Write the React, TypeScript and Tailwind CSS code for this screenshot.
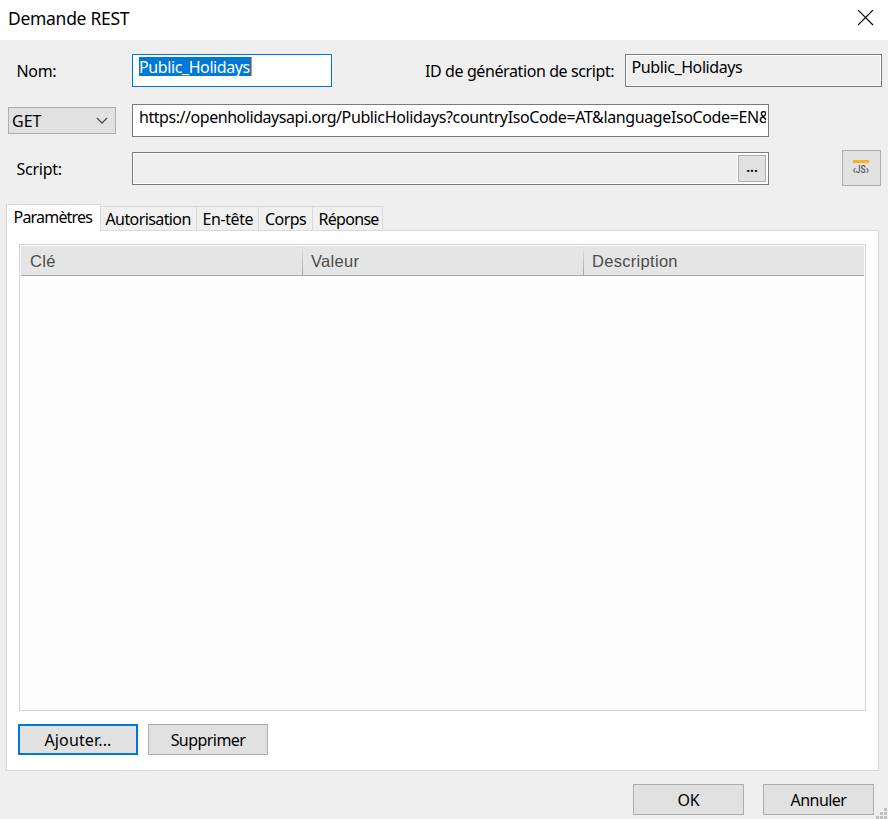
import clsx from "clsx";

const tabs = [
  { label: "Autorisation", width: "w-[96px] pl-[4.5px]", tracking: "tracking-[-0.6px]" },
  { label: "En-tête", width: "w-[62px] pl-[5.5px]", tracking: "tracking-[-0.4px]" },
  { label: "Corps", width: "w-[54px] pl-[6px]", tracking: "tracking-[-0.55px]" },
  { label: "Réponse", width: "w-[70px] pl-[5.5px]", tracking: "tracking-[-0.7px]" },
];

const columns = [
  { label: "Clé", width: "w-[282px]" },
  { label: "Valeur", width: "w-[281px]" },
  { label: "Description", width: "w-[280px]" },
];

type ButtonProps = {
  label: string;
  className: string;
  primary?: boolean;
  tracking?: string;
};

const Button = ({ label, className, primary, tracking }: ButtonProps) => (
  <button
    className={clsx(
      "flex h-[31px] items-center justify-center bg-[#e1e1e1] pt-px",
      primary ? "border-2 border-[#0078d7]" : "border border-[#adadad]",
      className
    )}
  >
    <span className={tracking}>{label}</span>
  </button>
);

const ResizeGrip = () => (
  <svg className="absolute right-[1px] bottom-0" width="11" height="11" fill="#bfbfbf">
    <rect x="8" y="0" width="3" height="3" />
    <rect x="4" y="4" width="3" height="3" />
    <rect x="8" y="4" width="3" height="3" />
    <rect x="0" y="8" width="3" height="3" />
    <rect x="4" y="8" width="3" height="3" />
    <rect x="8" y="8" width="3" height="3" />
  </svg>
);

const App = () => {
  return (
    <div className="relative flex h-[819px] w-[888px] flex-col overflow-hidden bg-[#efefef] font-['Noto_Sans',sans-serif] text-[16px] leading-[22px] whitespace-nowrap text-black">
      {/* Title bar */}
      <header className="flex h-10 items-start justify-between bg-white pr-[14px] pl-2">
        <h1 className="pt-[7px] text-[17.5px] tracking-[-0.3px]">Demande REST</h1>
        <svg className="mt-[10px]" width="16" height="16" stroke="#000" strokeWidth="1.1" fill="none">
          <path d="M0 0 15 15M15 0 0 15" />
        </svg>
      </header>

      {/* Name and script id */}
      <div className="mt-[14px] flex h-[33px] pr-[6px]">
        <span className="w-[132px] pt-[6px] pl-[16.5px] tracking-[-0.35px]">Nom:</span>
        <div className="w-[200px] border border-[#0078d7] bg-white pt-[2px] pl-[6px]">
          <span className="block h-[19px] w-[113px] border-r border-[#ff8728] bg-[#0078d7] leading-[20px] tracking-[-0.4px] text-white">
            Public_Holidays
          </span>
        </div>
        <span className="w-[292px] pt-[6px] pl-[93px] tracking-[-0.4px]">ID de génération de script:</span>
        <div className="ml-px flex-1 border border-[#7a7a7a] bg-[#efefef] pt-px pl-[5.5px] tracking-[-0.4px] shadow-[inset_0_0_0_1px_#fff]">
          Public_Holidays
        </div>
      </div>

      {/* Method and URL */}
      <div className="mt-[17px] flex h-[33px] pl-2">
        <button className="mt-[3px] mr-4 flex h-[27px] w-[108px] items-center justify-between border border-[#adadad] bg-[#e1e1e1] pt-px pr-[7px] pl-[3px]">
          <span>GET</span>
          <svg width="12" height="8" fill="none" stroke="#444" strokeWidth="1.2">
            <path d="M1 1 6 6.2 11 1" />
          </svg>
        </button>
        <div className="w-[637px] border border-[#7a7a7a] bg-white pt-px pr-[2px] pl-[6px]">
          <div className="overflow-hidden tracking-[-0.38px]">
            <span className="tracking-[-0.45px]">https://openholidaysapi.org/</span>
            PublicHolidays?countryIsoCode=AT&amp;languageIsoCode=EN&amp;
          </div>
        </div>
      </div>

      {/* Script */}
      <div className="mt-[13px] flex h-9">
        <span className="w-[132px] pt-[8px] pl-[16.5px] tracking-[-0.25px]">Script:</span>
        <div className="mt-[2px] flex h-[33px] w-[637px] justify-end border border-[#7a7a7a] bg-[#efefef] p-px shadow-[inset_0_0_0_1px_#fff]">
          <div className="border border-white">
            <button className="flex h-[27px] w-7 items-center justify-center border border-[#adadad] bg-[#e1e1e1] pb-[3px] text-[14px] font-semibold">
              ...
            </button>
          </div>
        </div>
        <button className="ml-[73px] flex h-9 w-[39px] flex-col items-center border border-[#adadad] bg-[#e1e1e1] pt-[9px] pr-px">
          <span className="h-[3px] w-4 bg-[#f5b324]" />
          <span className="mt-px flex scale-x-[0.85] items-center font-['Roboto',sans-serif] text-[10px] leading-[12px] font-medium text-[#5a5a5a]">
            <span className="text-[13px]">‹</span>
            <span>JS</span>
            <span className="text-[13px]">›</span>
          </span>
        </button>
      </div>

      {/* Tabs */}
      <div className="relative z-10 mt-[18px] -mb-px flex h-[27px] items-end pl-[6px]">
        <div className="h-[27px] w-[95px] border border-b-0 border-[#d9d9d9] bg-white pt-px pl-[6.5px] tracking-[-0.8px]">
          Paramètres
        </div>
        {tabs.map((tab) => (
          <div
            key={tab.label}
            className={clsx("h-[25px] border-t border-r border-b border-[#d9d9d9] bg-[#f0f0f0] pt-px", tab.width)}
          >
            <span className={tab.tracking}>{tab.label}</span>
          </div>
        ))}
      </div>

      {/* Panel with the parameters table */}
      <div className="ml-[6px] h-[541px] w-[873px] border border-[#d9d9d9] bg-white pt-[13px] pl-3">
        <div className="h-[467px] w-[847px] border border-[#d4d4d4] bg-[#fdfdfd]">
          <div className="mt-px ml-px flex h-[30px] w-[843px] border-b border-[#a5a5a5] bg-[#e5e5e5] font-['Liberation_Sans',sans-serif] text-[16.5px] text-[#4c4c4c]">
            {columns.map((column, i) => (
              <div
                key={column.label}
                className={clsx("flex justify-between pt-[4px]", i === 0 ? "pl-[9px]" : "pl-[8px]", column.width)}
              >
                <span className="tracking-[0.3px]">{column.label}</span>
                {i < 2 && <span className="-mt-[4px] h-[29px] w-px bg-linear-to-b from-[#e5e5e5] to-[#a5a5a5]" />}
              </div>
            ))}
          </div>
        </div>
        <div className="-ml-px mt-[13px] flex gap-[10px]">
          <Button label="Ajouter..." className="w-[120px]" primary tracking="tracking-[0.15px]" />
          <Button label="Supprimer" className="w-[120px]" tracking="tracking-[-0.55px]" />
        </div>
      </div>

      {/* Dialog buttons */}
      <footer className="mt-[13px] flex justify-end gap-[19px] pr-[14px]">
        <Button label="OK" className="w-[111px]" tracking="tracking-[-0.3px]" />
        <Button label="Annuler" className="w-[111px]" tracking="tracking-[-0.55px]" />
      </footer>
      <ResizeGrip />
    </div>
  );
};

export default App;
